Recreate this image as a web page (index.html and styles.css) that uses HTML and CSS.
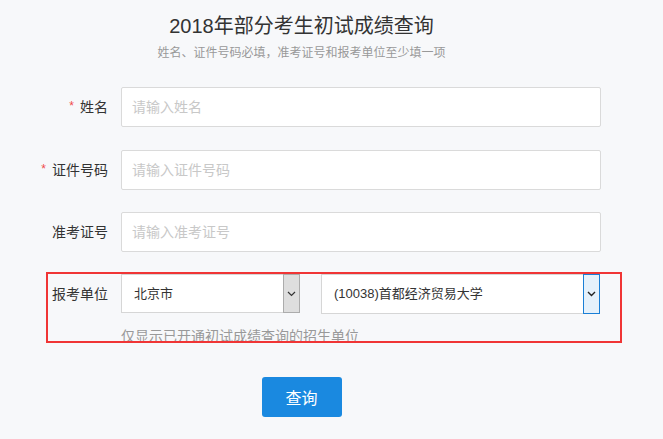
FILE: index.html
```html
<!DOCTYPE html>
<html lang="zh-CN">
<head>
    <meta charset="UTF-8">
    <meta name="viewport" content="width=device-width, initial-scale=1.0">
    <title>2018年部分考生初试成绩查询</title>
    <link rel="stylesheet" href="styles.css">
</head>
<body>
    <div class="page">
        <h1 class="title">2018年部分考生初试成绩查询</h1>
        <p class="tip">姓名、证件号码必填，准考证号和报考单位至少填一项</p>

        <form class="form">
            <div class="row">
                <label class="label"><span class="req">*</span>姓名</label>
                <input class="field" type="text" placeholder="请输入姓名">
            </div>
            <div class="row">
                <label class="label"><span class="req">*</span>证件号码</label>
                <input class="field" type="text" placeholder="请输入证件号码">
            </div>
            <div class="row">
                <label class="label">准考证号</label>
                <input class="field" type="text" placeholder="请输入准考证号">
            </div>

            <!-- 报考单位 -->
            <div class="row row-mark">
                <label class="label">报考单位</label>
                <div class="unit">
                    <div class="selects">
                        <div class="select select-city">
                            <span class="select-text">北京市</span>
                            <span class="arrow">
                                <svg width="9" height="6" viewBox="0 0 9 6"><path d="M1 1l3.5 3.5L8 1" fill="none" stroke="#333" stroke-width="1.2"/></svg>
                            </span>
                        </div>
                        <div class="select select-school active">
                            <span class="select-text">(10038)首都经济贸易大学</span>
                            <span class="arrow">
                                <svg width="9" height="6" viewBox="0 0 9 6"><path d="M1 1l3.5 3.5L8 1" fill="none" stroke="#222" stroke-width="1.4"/></svg>
                            </span>
                        </div>
                    </div>
                    <p class="help">仅显示已开通初试成绩查询的招生单位</p>
                </div>
            </div>

            <div class="actions">
                <button class="btn" type="button">查询</button>
            </div>
        </form>
    </div>
</body>
</html>
```

FILE: styles.css
```css
body {
    margin: 0;
    padding: 0;
    background-color: #f7f8fa;
    font-family: "Liberation Sans", "Noto Sans CJK SC", sans-serif;
    color: #333;
}

.page {
    width: 603px;
    padding-top: 12px;
}

.title {
    margin: 0;
    font-size: 20px;
    font-weight: normal;
    line-height: 28px;
    text-align: center;
    color: #333;
}

.tip {
    margin: 4px 0 0;
    font-size: 12px;
    line-height: 18px;
    text-align: center;
    color: #999;
}

.form {
    margin-top: 24px;
}

.row {
    display: flex;
    align-items: center;
    margin-bottom: 22px;
}

.label {
    flex: 0 0 108px;
    margin-right: 13px;
    text-align: right;
    font-size: 14px;
    line-height: 40px;
    color: #333;
}

.req {
    color: #f04a4a;
    font-size: 12px;
    margin-right: 6px;
    vertical-align: 2px;
}

.field {
    box-sizing: border-box;
    width: 480px;
    height: 40px;
    padding: 0 10px;
    border: 1px solid #dadada;
    border-radius: 2px;
    background: #fff;
    font-family: inherit;
    font-size: 14px;
    color: #333;
    outline: none;
}

.field::placeholder {
    color: #c8c8c8;
}

/* 红框标注 */
.row-mark {
    box-sizing: border-box;
    width: 576px;
    height: 71px;
    margin-left: 46px;
    margin-top: -2px;
    border: 2px solid #f03535;
    align-items: flex-start;
    overflow: hidden;
    margin-bottom: 34px;
}

.row-mark .label {
    flex-basis: 60px;
}

.selects {
    display: flex;
    gap: 21px;
}

.select {
    box-sizing: border-box;
    display: flex;
    height: 40px;
    border: 1px solid #d6d6d6;
    background: #fff;
}

.select-city {
    width: 179px;
    height: 39px;
}

.select-school {
    width: 279px;
}

.select-text {
    flex: 1;
    padding-left: 12px;
    font-size: 13px;
    line-height: 38px;
    color: #333;
}

.select-city .select-text {
    line-height: 37px;
}

.arrow {
    box-sizing: border-box;
    width: 17px;
    margin: -1px -1px -1px 0;
    display: flex;
    align-items: center;
    justify-content: center;
    background: #dedede;
    border: 1px solid #acacac;
}

.active .arrow {
    background: #e5f1fb;
    border-color: #1a7fd6;
}

.help {
    margin: 12px 0 0;
    font-size: 14px;
    line-height: 20px;
    color: #999;
}

.actions {
    text-align: center;
}

.btn {
    width: 80px;
    height: 40px;
    border: none;
    border-radius: 3px;
    background-color: #1a89e0;
    color: #fff;
    font-family: inherit;
    font-size: 16px;
    cursor: pointer;
}

.btn:hover {
    opacity: 0.9;
}
```
